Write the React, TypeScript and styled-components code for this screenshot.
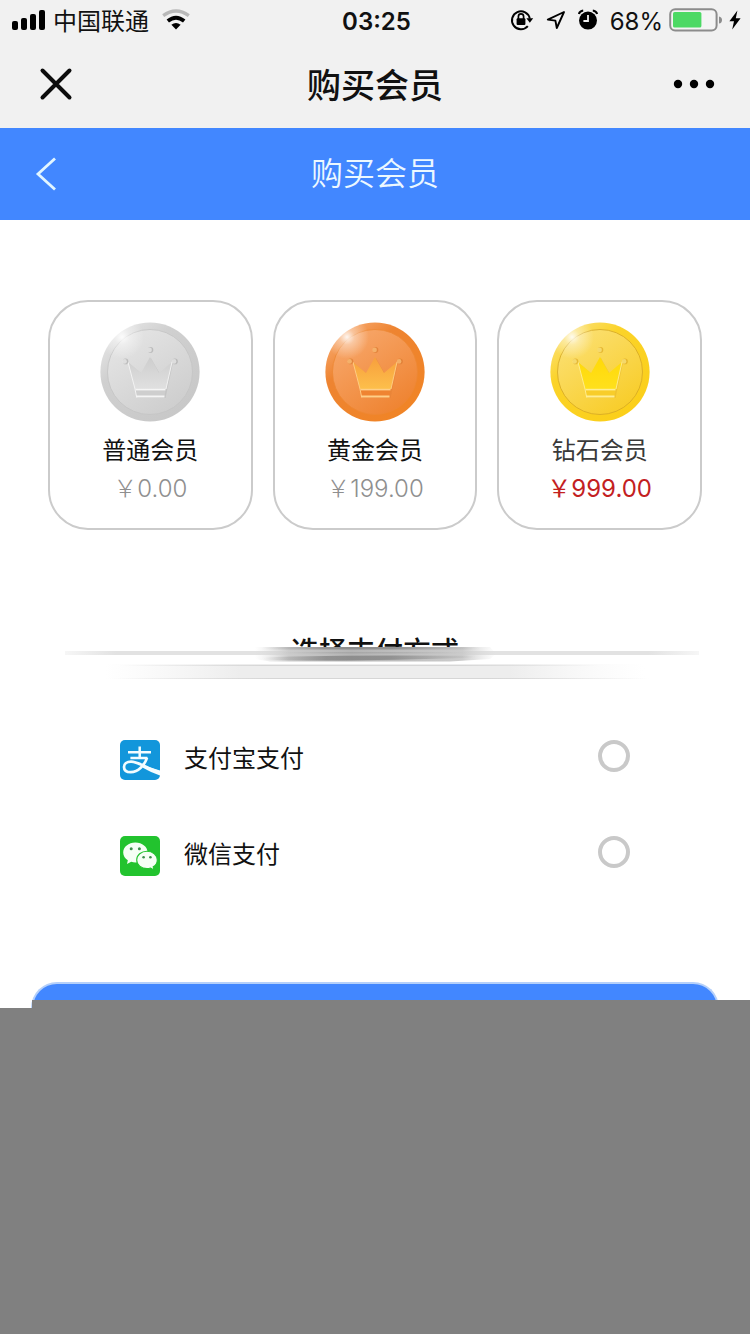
import React, { useState } from "react";
import styled, { createGlobalStyle } from "styled-components";

const GlobalStyle = createGlobalStyle`
  *, *::before, *::after { box-sizing: border-box; }
  html, body { margin: 0; padding: 0; background: #fff; }
  body, button, input {
    font-family: Inter, "Noto Sans CJK SC", sans-serif;
  }
  button { border: 0; padding: 0; background: none; color: inherit; cursor: pointer; }
  svg { display: block; flex: none; }
`;

const Page = styled.div`
  min-height: 100vh;
  display: flex;
  flex-direction: column;
  color: #111;
`;

const StatusBar = styled.div`
  display: grid;
  grid-template-columns: 1fr auto 1fr;
  align-items: center;
  height: 40px;
  padding: 0 9px 0 12px;
  background: #f1f1f1;
`;

const StatusGroup = styled.div<{ $end?: boolean; $gap: number }>`
  display: flex;
  align-items: center;
  justify-content: ${(p) => (p.$end ? "flex-end" : "flex-start")};
  gap: ${(p) => p.$gap}px;
`;

const StatusText = styled.span<{ $bold?: boolean }>`
  padding-top: 3px;
  font-size: 24px;
  font-weight: ${(p) => (p.$bold ? 600 : 400)};
  line-height: 36px;
`;

const NavBar = styled.header`
  display: grid;
  grid-template-columns: 1fr auto 1fr;
  align-items: center;
  height: 88px;
  padding: 0 34px;
  background: #f1f1f1;
`;

const NavTitle = styled.h1`
  margin: 0;
  padding-top: 4px;
  font-size: 34px;
  font-weight: 500;
  line-height: 48px;
`;

const IconButton = styled.button<{ $end?: boolean }>`
  justify-self: ${(p) => (p.$end ? "end" : "start")};
`;

const PageHeader = styled.header`
  display: grid;
  grid-template-columns: 1fr auto 1fr;
  align-items: center;
  height: 92px;
  padding: 0 34px;
  background: #4287ff;
  color: #ecf8ff;
`;

const PageTitle = styled.h2`
  margin: 0;
  font-size: 32px;
  font-weight: 350;
  line-height: 48px;
`;

const Plans = styled.section`
  display: flex;
  gap: 20px;
  padding: 80px 48px 0;
`;

const PlanCard = styled.button`
  flex: 1;
  display: flex;
  flex-direction: column;
  align-items: center;
  height: 230px;
  padding-top: 20px;
  border: 2px solid #cbcbcb;
  border-radius: 40px;
`;

const PlanName = styled.span<{ $soft?: boolean }>`
  margin-top: 9px;
  font-size: 24px;
  line-height: 40px;
  color: ${(p) => (p.$soft ? "#3a3a3a" : "#111")};
`;

const PlanPrice = styled.span<{ $accent?: boolean }>`
  font-size: 24px;
  line-height: 36px;
  font-weight: ${(p) => (p.$accent ? 400 : 300)};
  color: ${(p) => (p.$accent ? "#c3201f" : "#8f8f8f")};
`;

const SectionHead = styled.div`
  position: relative;
  margin-top: 100px;
`;

const SectionTitle = styled.h3`
  margin: 0;
  text-align: center;
  font-size: 28px;
  font-weight: 500;
  line-height: 44px;
`;

const Smear = styled.svg`
  position: absolute;
  left: 0;
  top: 14px;
  width: 100%;
  height: 40px;
`;

const Methods = styled.div`
  display: flex;
  flex-direction: column;
  gap: 56px;
  padding: 66px 120px 0;
`;

const Method = styled.label`
  display: flex;
  align-items: flex-start;
  height: 40px;
  cursor: pointer;
`;

const MethodName = styled.span`
  flex: 1;
  margin-left: 24px;
  font-size: 24px;
  line-height: 38px;
`;

const Radio = styled.input`
  appearance: none;
  width: 32px;
  height: 32px;
  margin: 0;
  border: 4px solid #c9c9c9;
  border-radius: 50%;
  background: #fff;
  &:checked { border-color: #4287ff; }
`;

const Actions = styled.div`
  display: flex;
  margin-top: 106px;
  padding: 0 31px;
`;

const PayButton = styled.button`
  flex: 1;
  height: 26px;
  border: 2px solid #b5d0fa;
  border-bottom: 0;
  border-radius: 26px 26px 0 0;
  background: #4287ff;
`;

const Blank = styled.div`
  flex: 1;
  margin-top: -8px;
  background: #808080;
  clip-path: polygon(0 8px, 32px 8px, 32px 0, 100% 0, 100% 100%, 0 100%);
`;

const SignalIcon = () => (
  <svg width="34" height="22" viewBox="0 0 34 22" fill="#000">
    <rect x="0" y="12" width="6" height="9" rx="2" />
    <rect x="9" y="9" width="6" height="12" rx="2" />
    <rect x="18" y="5" width="6" height="16" rx="2" />
    <rect x="27" y="1" width="6" height="20" rx="2" />
  </svg>
);

const WifiIcon = () => (
  <svg width="28" height="22" viewBox="0 0 28 22">
    <path d="M1.2 6.6Q14-2.6 26.8 6.6" fill="none" stroke="#b8b8b8" strokeWidth="3.4" />
    <path d="M5.8 12Q14 5.4 22.2 12" fill="none" stroke="#000" strokeWidth="3.8" />
    <path d="M9.4 15.8Q14 12.2 18.6 15.8L14 20.4Z" fill="#000" />
  </svg>
);

const LockIcon = () => (
  <svg width="24" height="22" viewBox="0 0 24 22">
    <path d="M17.8 17.2A9 9 0 1 1 19.8 9.6" fill="none" stroke="#000" strokeWidth="2" />
    <path d="M16.4 9.2H23.2L19.8 13.8Z" fill="#000" />
    <rect x="6.6" y="9.2" width="8.8" height="6.8" rx="1" fill="#000" />
    <path d="M8.4 10V7.4a2.6 2.6 0 0 1 5.2 0V10" fill="none" stroke="#000" strokeWidth="1.7" />
  </svg>
);

const LocationIcon = () => (
  <svg width="20" height="20" viewBox="0 0 20 20">
    <path d="M18 2L1.8 9.6L9.4 10.6L10.8 18Z" fill="none" stroke="#000" strokeWidth="1.9" strokeLinejoin="round" />
  </svg>
);

const AlarmIcon = () => (
  <svg width="20" height="22" viewBox="0 0 20 22">
    <circle cx="10" cy="11.6" r="9" fill="#000" />
    <path d="M0.8 5Q1.8 1.8 5.2 1.4M19.2 5Q18.2 1.8 14.8 1.4" fill="none" stroke="#000" strokeWidth="2" />
    <path d="M10 6V12H5.4" fill="none" stroke="#f1f1f1" strokeWidth="1.8" />
  </svg>
);

const BatteryIcon = () => (
  <svg width="54" height="24" viewBox="0 0 54 24">
    <rect x="1.2" y="1.2" width="46.4" height="21.2" rx="5" fill="#f4f4f4" stroke="#8c8c8c" strokeWidth="2" />
    <rect x="4" y="4" width="28.4" height="15.6" rx="1.6" fill="#4cd964" />
    <path d="M50 8.4Q53 9 53 12T50 15.6Z" fill="#8c8c8c" />
  </svg>
);

const BoltIcon = () => (
  <svg width="12" height="20" viewBox="0 0 12 20">
    <path d="M8.4 0.6L0.4 11.2H5L3.2 19.4L11.6 8.2H6.8Z" fill="#000" />
  </svg>
);

type Tone = {
  id: string;
  rim: string;
  edge: string;
  light: string;
  dark: string;
  ring: string;
  crownTop: string;
  crownBottom: string;
  line: string;
  shade: string;
};

const Coin = ({ tone }: { tone: Tone }) => (
  <svg width="100" height="100" viewBox="0 0 100 100">
    <defs>
      <linearGradient id={`${tone.id}-rim`} x1="0.15" y1="0.1" x2="0.8" y2="0.9">
        <stop offset="0" stopColor={tone.light} />
        <stop offset="0.3" stopColor={tone.rim} />
        <stop offset="1" stopColor={tone.edge} />
      </linearGradient>
      <linearGradient id={`${tone.id}-face`} x1="0.15" y1="0.1" x2="0.75" y2="0.95">
        <stop offset="0" stopColor={tone.light} />
        <stop offset="1" stopColor={tone.dark} />
      </linearGradient>
      <linearGradient id={`${tone.id}-crown`} x1="0" y1="0" x2="0" y2="1">
        <stop offset="0" stopColor={tone.crownTop} />
        <stop offset="1" stopColor={tone.crownBottom} />
      </linearGradient>
      <radialGradient id={`${tone.id}-shine`}>
        <stop offset="0" stopColor="#fff" stopOpacity="0.9" />
        <stop offset="0.35" stopColor="#fff" stopOpacity="0.4" />
        <stop offset="1" stopColor="#fff" stopOpacity="0" />
      </radialGradient>
    </defs>
    <circle cx="50" cy="50" r="49.6" fill={`url(#${tone.id}-rim)`} />
    <circle cx="50" cy="50" r="42.5" fill={`url(#${tone.id}-face)`} stroke={tone.ring} strokeWidth="0.8" />
    <path d="M28 40L41 51L50 35L59 51L72 40L64.5 75H36.5Z" fill={tone.shade} transform="translate(1 1)" opacity="0.35" />
    <path d="M28 40L41 51L50 35L59 51L72 40L66 67H35Z" fill={`url(#${tone.id}-crown)`} />
    <path d="M35.5 68H65.5L64.5 74H36.5Z" fill={tone.dark} />
    <path d="M72 40L66 67" fill="none" stroke={tone.line} strokeWidth="0.9" />
    <path d="M28 40L35 67L36.5 74.5" fill="none" stroke={tone.line} strokeWidth="0.9" />
    <path d="M35.5 67.6H65.5" stroke={tone.line} strokeWidth="1.6" />
    <path d="M36 74.5H64.5" stroke={tone.line} strokeWidth="2" />
    {[[25, 39], [50, 27.5], [74.5, 39]].map(([x, y]) => (
      <g key={x}>
        <circle cx={x + 0.5} cy={y + 0.4} r="2.8" fill={tone.shade} opacity="0.7" />
        <circle cx={x - 0.4} cy={y + 0.4} r="2.3" fill={tone.line} opacity="0.6" />
      </g>
    ))}
    <circle cx="22" cy="15" r="22" fill={`url(#${tone.id}-shine)`} />
  </svg>
);

const silver: Tone = {
  id: "silver", rim: "#d0d0d0", edge: "#c8c8c8", light: "#e4e4e4", dark: "#cecece", ring: "#c4c4c4",
  crownTop: "#cdcdcd", crownBottom: "#e0e0e0", line: "#f5f5f5", shade: "#adadad",
};
const orange: Tone = {
  id: "orange", rim: "#ee8431", edge: "#f08426", light: "#f7a669", dark: "#ef8432", ring: "#ee8834",
  crownTop: "#f79f3d", crownBottom: "#fdbf4b", line: "#ffcf88", shade: "#dc7b30",
};
const gold: Tone = {
  id: "gold", rim: "#fbd329", edge: "#fbcf1a", light: "#fbdf70", dark: "#f8cd2a", ring: "#d4a725",
  crownTop: "#ffd908", crownBottom: "#ffe01c", line: "#ffee93", shade: "#dda922",
};

const AlipayIcon = () => (
  <svg width="40" height="40" viewBox="0 0 40 40">
    <rect width="40" height="40" rx="5" fill="#1296db" />
    <path d="M8 12.2H31M19.7 6.4V18M10.4 18H27.4" fill="none" stroke="#f2fcff" strokeWidth="2.5" />
    <path
      d="M27 17.6C25 24.5 18.4 32.2 10.8 32.2C6.4 32.2 4 30 4 27C4 23.6 7 21.6 11 21.6C18.4 21.6 27.2 28.4 40 32.4"
      fill="none"
      stroke="#f2fcff"
      strokeWidth="2.7"
    />
    <path d="M24 25.6L40 30.6V35.4C34 33.2 28 30.6 22.4 27.4Z" fill="#f2fcff" />
  </svg>
);

const WechatIcon = () => (
  <svg width="40" height="40" viewBox="0 0 40 40">
    <rect width="40" height="40" rx="5" fill="#22c32e" />
    <path d="M15.4 6.4C8.6 6.4 3.2 10.8 3.2 16.4C3.2 19.6 5 22.3 7.8 24.2L7 28L11.2 25.8C12.5 26.2 14 26.4 15.4 26.4C22.2 26.4 27.6 22 27.6 16.4S22.2 6.4 15.4 6.4Z" fill="#f5fff5" />
    <path
      d="M27 15.2C21.2 15.2 16.7 19.1 16.7 23.9S21.2 32.6 27 32.6C28.2 32.6 29.4 32.4 30.5 32L34 34L33.2 30.8C35.8 29.2 37.3 26.8 37.3 23.9C37.3 19.1 32.8 15.2 27 15.2Z"
      fill="#f5fff5"
      stroke="#22c32e"
      strokeWidth="1.1"
    />
    <g fill="#3d8f4b">
      <circle cx="11.2" cy="12.8" r="1.5" />
      <circle cx="19.4" cy="12.8" r="1.5" />
      <circle cx="23.6" cy="21.2" r="1.3" />
      <circle cx="30.4" cy="21.2" r="1.3" />
    </g>
  </svg>
);

const TitleSmear = () => (
  <Smear viewBox="0 0 750 40" preserveAspectRatio="none" aria-hidden="true">
    <defs>
      <linearGradient id="smear-rule">
        <stop offset="0" stopColor="#e2e2e2" stopOpacity="0.3" />
        <stop offset="0.08" stopColor="#e2e2e2" />
        <stop offset="0.92" stopColor="#e2e2e2" />
        <stop offset="1" stopColor="#e2e2e2" stopOpacity="0.3" />
      </linearGradient>
      <linearGradient id="smear-core">
        <stop offset="0" stopColor="#dcdcdc" stopOpacity="0" />
        <stop offset="0.14" stopColor="#cccccc" />
        <stop offset="0.4" stopColor="#b4b4b4" />
        <stop offset="0.86" stopColor="#cccccc" />
        <stop offset="1" stopColor="#dcdcdc" stopOpacity="0" />
      </linearGradient>
      <linearGradient id="smear-dark">
        <stop offset="0" stopColor="#666" stopOpacity="0" />
        <stop offset="0.3" stopColor="#666" stopOpacity="0.5" />
        <stop offset="0.6" stopColor="#666" stopOpacity="0.5" />
        <stop offset="1" stopColor="#666" stopOpacity="0" />
      </linearGradient>
      <linearGradient id="smear-band">
        <stop offset="0" stopColor="#f2f2f2" stopOpacity="0" />
        <stop offset="0.25" stopColor="#ededed" />
        <stop offset="0.75" stopColor="#ededed" />
        <stop offset="1" stopColor="#f6f6f6" stopOpacity="0" />
      </linearGradient>
      <linearGradient id="smear-edge">
        <stop offset="0" stopColor="#d6d6d6" stopOpacity="0" />
        <stop offset="0.3" stopColor="#d6d6d6" />
        <stop offset="0.7" stopColor="#d6d6d6" />
        <stop offset="1" stopColor="#d6d6d6" stopOpacity="0" />
      </linearGradient>
    </defs>
    <rect x="285" y="4" width="180" height="16" fill="#fff" />
    <rect x="65" y="7" width="634" height="4" fill="url(#smear-rule)" />
    <path d="M255 3H490L496 10L490 15L450 17.5H270L255 15Z" fill="url(#smear-core)" />
    <path d="M262 3H480V5.4H262Z" fill="url(#smear-dark)" />
    <path d="M262 13.4Q350 10.6 476 12V13.6Q350 18 262 15.8Z" fill="url(#smear-dark)" />
    <path d="M280 8H470V9.6H280Z" fill="url(#smear-dark)" opacity="0.35" />
    <rect x="105" y="20" width="540" height="15" fill="url(#smear-band)" />
    <rect x="120" y="21" width="480" height="1" fill="url(#smear-edge)" />
    <rect x="110" y="34" width="540" height="1" fill="url(#smear-edge)" />
  </Smear>
);

const plans = [
  { name: "普通会员", price: "\uFFE50.00", tone: silver },
  { name: "黄金会员", price: "\uFFE5199.00", tone: orange },
  { name: "钻石会员", price: "\uFFE5999.00", tone: gold, active: true },
];

const methods = [
  { id: "alipay", name: "支付宝支付", icon: <AlipayIcon /> },
  { id: "wechat", name: "微信支付", icon: <WechatIcon /> },
];

export default function App() {
  const [method, setMethod] = useState("");

  return (
    <Page>
      <GlobalStyle />
      <StatusBar>
        <StatusGroup $gap={13}>
          <StatusGroup $gap={7}>
            <SignalIcon />
            <StatusText>中国联通</StatusText>
          </StatusGroup>
          <WifiIcon />
        </StatusGroup>
        <StatusText as="time" $bold>03:25</StatusText>
        <StatusGroup $end $gap={12}>
          <LockIcon />
          <LocationIcon />
          <AlarmIcon />
          <StatusGroup $gap={6}>
            <StatusText>68%</StatusText>
            <BatteryIcon />
            <BoltIcon />
          </StatusGroup>
        </StatusGroup>
      </StatusBar>
      <NavBar>
        <IconButton aria-label="关闭">
          <svg width="44" height="36" viewBox="0 0 44 36">
            <path d="M8.5 4.5L35.5 31.5M35.5 4.5L8.5 31.5" stroke="#0c0c0c" strokeWidth="4" strokeLinecap="round" />
          </svg>
        </IconButton>
        <NavTitle>购买会员</NavTitle>
        <IconButton $end aria-label="更多">
          <svg width="44" height="36" viewBox="0 0 44 36" fill="#000">
            <circle cx="6" cy="18" r="4.2" />
            <circle cx="22" cy="18" r="4.2" />
            <circle cx="38" cy="18" r="4.2" />
          </svg>
        </IconButton>
      </NavBar>
      <PageHeader>
        <IconButton aria-label="返回">
          <svg width="24" height="36" viewBox="0 0 24 36">
            <path d="M21 2.5L4 18L21 33.5" fill="none" stroke="#e2f6ff" strokeWidth="2.8" />
          </svg>
        </IconButton>
        <PageTitle>购买会员</PageTitle>
      </PageHeader>
      <Plans>
        {plans.map((plan) => (
          <PlanCard key={plan.name} type="button">
            <Coin tone={plan.tone} />
            <PlanName $soft={plan.active}>{plan.name}</PlanName>
            <PlanPrice $accent={plan.active}>{plan.price}</PlanPrice>
          </PlanCard>
        ))}
      </Plans>
      <SectionHead>
        <SectionTitle>选择支付方式</SectionTitle>
        <TitleSmear />
      </SectionHead>
      <Methods role="radiogroup" aria-label="选择支付方式">
        {methods.map((item) => (
          <Method key={item.id}>
            {item.icon}
            <MethodName>{item.name}</MethodName>
            <Radio
              type="radio"
              name="method"
              value={item.id}
              checked={method === item.id}
              onChange={() => setMethod(item.id)}
            />
          </Method>
        ))}
      </Methods>
      <Actions>
        <PayButton type="button" aria-label="支付" />
      </Actions>
      <Blank />
    </Page>
  );
}
